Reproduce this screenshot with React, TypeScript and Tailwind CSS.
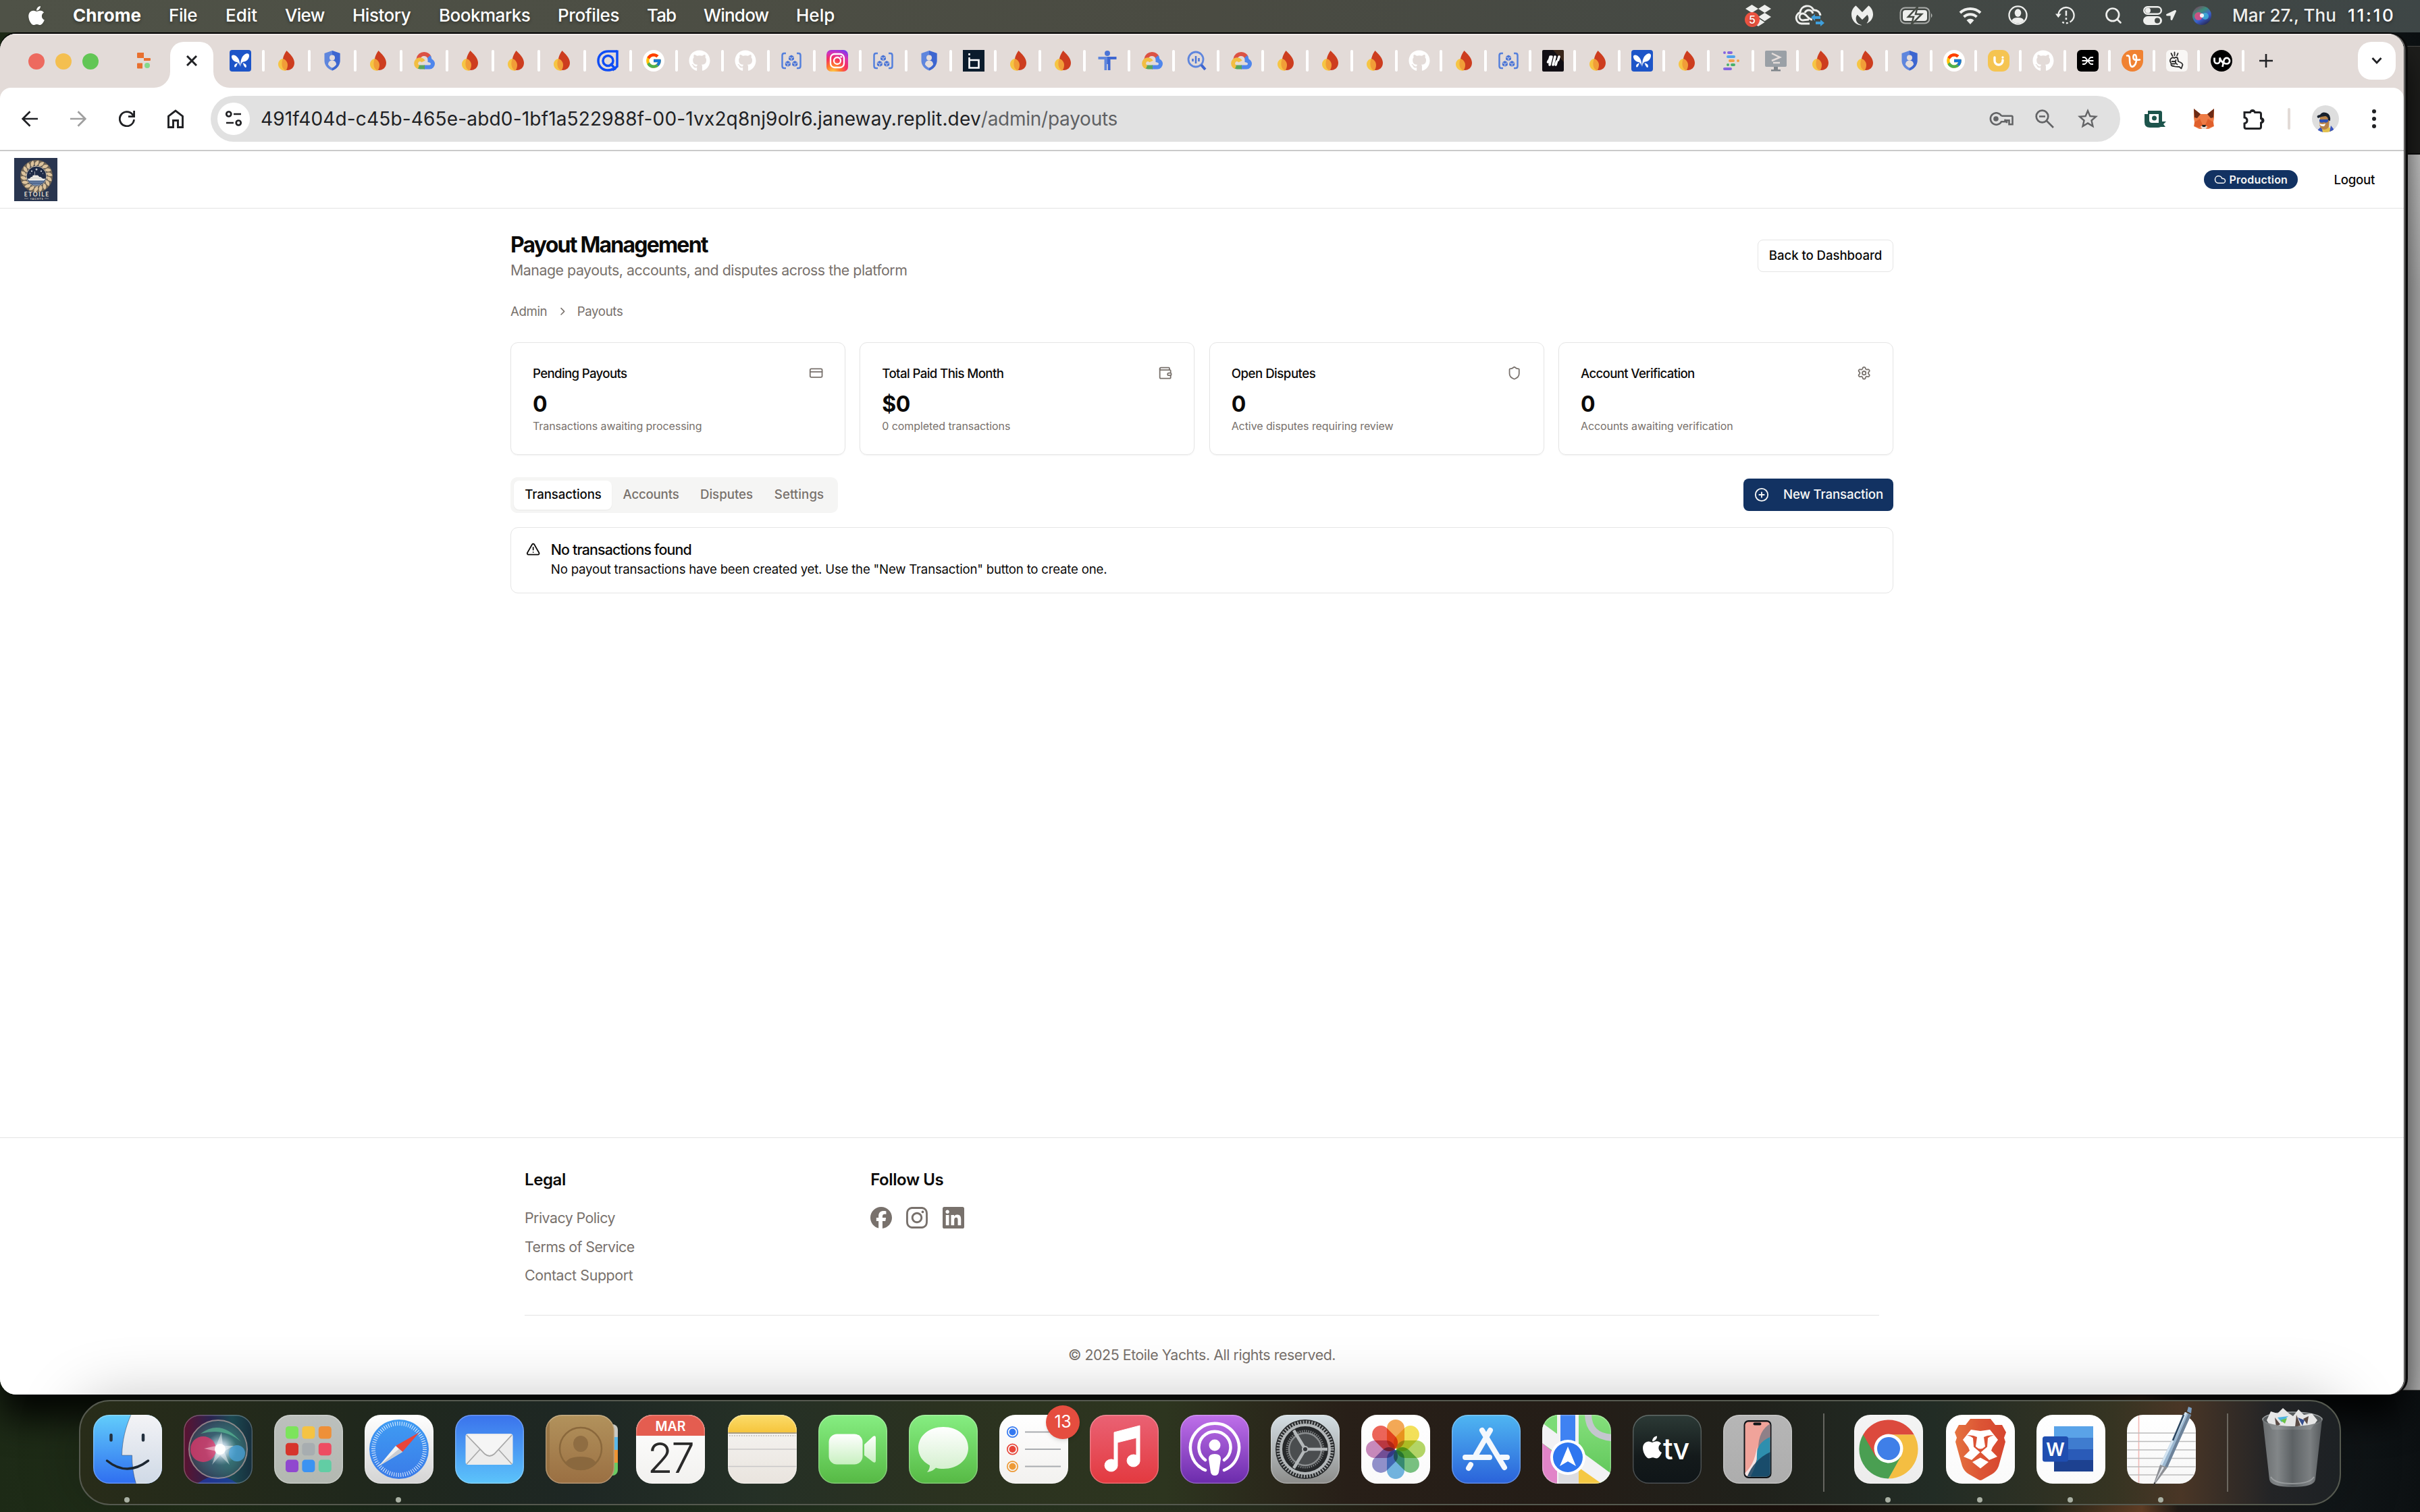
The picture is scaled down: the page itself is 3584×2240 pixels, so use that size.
import type { ReactNode } from 'react';
import { ChevronRight, CirclePlus, Cloud, CreditCard, Search, Settings, Shield, TriangleAlert, Wallet } from 'lucide-react';
import { FaApple, FaDropbox, FaGithub, FaLocationArrow } from 'react-icons/fa';
import { FcGoogle } from 'react-icons/fc';
import { MdStarBorder } from 'react-icons/md';
import { SiFacebook, SiInstagram, SiMalwarebytes } from 'react-icons/si';

/* ---------- shared svg helpers ---------- */

type Stop = [number, string];

function Lin({ id, stops, x2 = 0, y2 = 1 }: { id: string; stops: Stop[]; x2?: number; y2?: number }) {
  return (
    <linearGradient id={id} x1="0" y1="0" x2={x2} y2={y2}>
      {stops.map(([o, c]) => (
        <stop key={o} offset={o} stopColor={c} />
      ))}
    </linearGradient>
  );
}

function Fav({ children }: { children: ReactNode }) {
  return (
    <svg viewBox="0 0 32 32" className="size-8 shrink-0">
      {children}
    </svg>
  );
}

/* ---------- favicons ---------- */

const Flame = () => (
  <Fav>
    <path d="M16.5 1C11.500 8 10.500 13 10.500 19.500c0 7 3 10.500 7 10.500 5.500 0 10.500-4 10.500-11C28 12 21.500 6 16.500 1Z" fill="#cd3d1f" />
    <path d="M11 13C6.500 13.500 4 17.500 4 21c0 6 5 10 12 10-4-2-6-6-6-11z" fill="#f6c544" />
    <path d="M11 13c4 1 7 5 7 9.500 0 3.500-1.500 6.500-2.500 8C9 29 8 19 11 13Z" fill="#f19d38" />
  </Fav>
);

const Butterfly = () => (
  <Fav>
    <rect width="32" height="32" rx="4" fill="#1d55c8" />
    <path d="M15.500 25C15.500 17 14 12 9 8.500 5.500 6.500 2.500 7.500 3 10.500c.5 4 4 7 8 7.500 2 .5 3.500 3 4.500 7Z" fill="#fff" />
    <path d="M16 25c0-9 1.500-15 6.500-18.500 4-2.500 7-1 6.500 2.500-.5 5-4 8-8.500 8.500-2.500.5-4 3.500-4.500 7.500Z" fill="#fff" />
    <path d="M12 19c-1 3-2 6-3.500 6.500S6.500 23 8 21.500 11 20 12 19ZM19.500 19c1 3 2.500 6.500 4 7s2-2.500.5-4.500-3.500-1.500-4.500-2.500Z" fill="#fff" />
  </Fav>
);

const ShieldFav = () => (
  <Fav>
    <path d="M16 1 4.500 5v11c0 7 5 12 11.500 14.500C22.500 28 27.500 23 27.500 16V5Z" fill="#5f86dd" />
    <path d="M16 1v29.500C22.500 28 27.500 23 27.500 16V5Z" fill="#3d66d0" />
    <circle cx="16" cy="11.500" r="4" fill="#e4dcda" />
    <path d="M10 21.500c0-4 3-6 6-6s6 2 6 6c-1.500 2.500-3.500 4-6 5-2.500-1-4.500-2.500-6-5Z" fill="#e4dcda" />
  </Fav>
);

const CloudFav = () => (
  <Fav>
    <g fill="none" strokeWidth="6">
      <path d="M7.500 13.500C8.500 8.500 12 6 16 6c3.500 0 6.500 2 8 5" stroke="#dc5244" />
      <path d="M23 10c1.500 1.500 1.500 4 1.500 5.500 2.500.5 4.500 2.500 4.500 5s-2 5-5 5h-8" stroke="#4f86ec" />
      <path d="M17 25.500h-7c-1.500 0-2.500-.5-3.500-1.500" stroke="#58a55c" />
      <path d="M8 25.500C4.500 24 3.500 21 4.500 18c1-3 4.500-4.500 7.500-3.500 1.500.5 2.500 1.500 3 2.500" stroke="#f2be42" />
    </g>
  </Fav>
);

const QFav = () => (
  <Fav>
    <path d="M30 2H17C8 2 2 8 2 16s6 14 14 14c3 0 6-.5 8-2" fill="none" stroke="#0f4df5" strokeWidth="3.500" />
    <path d="M30 .5v24L23 30" fill="none" stroke="#0f4df5" strokeWidth="3.500" />
    <circle cx="16.500" cy="16" r="7.500" fill="none" stroke="#0f4df5" strokeWidth="3.500" />
    <path d="m20 20 8 9" stroke="#0f4df5" strokeWidth="3.500" />
  </Fav>
);

const GoogleFav = () => (
  <span className="flex size-8 shrink-0 items-center justify-center rounded-full bg-white">
    <FcGoogle className="size-[26px]" />
  </span>
);

const GithubFav = () => <FaGithub className="size-8 shrink-0 text-white" />;

const Brackets = () => (
  <Fav>
    <path d="M8 5H5.500Q2.500 5 2.500 8v16q0 3 3 3H8M24 5h2.500q3 0 3 3v16q0 3-3 3H24" fill="none" stroke="#5580dc" strokeWidth="2.500" />
    <g fill="#4a74d6">
      <path d="m16 7.500 4 2.300v4.400l-4 2.300-4-2.300V9.800ZM10.800 16l4 2.300v4.400l-4 2.300-4-2.300v-4.400ZM21.200 16l4 2.300v4.400l-4 2.300-4-2.300v-4.400Z" />
    </g>
    <path d="M12 10l4 2.300 4-2.300M16 12.300v4M6.800 18.500l4 2.300 4-2.300m-4 2.300V25m6.400-6.500 4 2.300 4-2.300m-4 2.300V25" stroke="#e4dcda" strokeWidth=".9" fill="none" />
  </Fav>
);

const Insta = () => (
  <Fav>
    <defs>
      <radialGradient id="ig" cx=".3" cy="1.050" r="1.150">
        <stop offset="0" stopColor="#ffd54a" />
        <stop offset=".3" stopColor="#ff7a2e" />
        <stop offset=".58" stopColor="#f5305f" />
        <stop offset=".8" stopColor="#d432b8" />
        <stop offset="1" stopColor="#7a38f0" />
      </radialGradient>
    </defs>
    <rect width="32" height="32" rx="7" fill="url(#ig)" />
    <rect x="6" y="6" width="20" height="20" rx="6" fill="none" stroke="#fff" strokeWidth="2.300" />
    <circle cx="16" cy="16" r="5" fill="none" stroke="#fff" strokeWidth="2.300" />
    <circle cx="21.700" cy="10.300" r="1.400" fill="#fff" />
  </Fav>
);

const DarkB = () => (
  <Fav>
    <rect width="32" height="32" fill="#0b1c2c" />
    <path d="M9.500 5v3M9.500 11v15.500h14V15h-14" fill="none" stroke="#fff" strokeWidth="2.600" />
  </Fav>
);

const PersonFav = () => (
  <Fav>
    <circle cx="16" cy="5" r="4" fill="#4a74d6" />
    <path d="M2.500 10H16v20h-4.500V14h-9Z" fill="#5f86dd" />
    <path d="M29.500 10H16v20h4.500V14h9Z" fill="#3d66d0" />
    <path d="M16 21v9" stroke="#e4dcda" strokeWidth="1.500" />
  </Fav>
);

const Analytics = () => (
  <Fav>
    <circle cx="15" cy="14" r="11" fill="none" stroke="#5f86dd" strokeWidth="2.800" />
    <path d="m23 22 6 7" stroke="#3d66d0" strokeWidth="4" />
    <path d="M10.500 13v4M15 9v11M19.500 12v5" stroke="#4a74d6" strokeWidth="2.500" />
  </Fav>
);

const Hashes = () => (
  <Fav>
    <rect width="32" height="32" rx="2" fill="#110e14" />
    <path d="M16 0h14q2 0 2 2v16Z" fill="#4a301c" opacity=".7" />
    <path d="M10.500 15 12 10M19 10l-3 12M25 10l-1.500 5M14 10l-3 12M8.500 18l1-2M20 22l1.500-5" stroke="#fff" strokeWidth="3.600" strokeLinecap="round" />
  </Fav>
);

const Ide = () => (
  <Fav>
    <g strokeWidth="4" strokeLinecap="round">
      <path d="M6 4h.01M12 4h4" stroke="#8565e0" />
      <path d="M11 10h9" stroke="#4fa3ea" />
      <path d="M14 16h5M26 16h.01" stroke="#f3a04c" />
      <path d="M11 22h.01M17 22h3" stroke="#47b06b" />
      <path d="M6 28h9" stroke="#8565e0" />
    </g>
  </Fav>
);

const Shell = () => (
  <Fav>
    <rect y="1" width="32" height="24" rx="2" fill="#9aa0a6" />
    <path d="M13 25h6v4h4v2.500H9V29h4Z" fill="#80868b" />
    <path d="m10 5 12 6-12 5M12 19h10" stroke="#e4dcda" strokeWidth="2.500" fill="none" />
  </Fav>
);

const YellowU = () => (
  <Fav>
    <rect width="32" height="32" rx="11" fill="#f5c451" />
    <path d="M10 11v5a6 6 0 0 0 12 0v-1" fill="none" stroke="#fff" strokeWidth="3.400" strokeLinecap="round" />
    <circle cx="22" cy="11" r="1.700" fill="#fff" />
  </Fav>
);

const BlackX = () => (
  <Fav>
    <rect width="32" height="32" rx="6" fill="#000" />
    <path d="M8 11h3q2 0 4.500 5Q13 21 10.500 21H8M24 11h-3q-2 0-4.500 5 2.500 5 5 5H24M7.500 16h17" fill="none" stroke="#fff" strokeWidth="1.800" />
  </Fav>
);

const OrangeV = () => (
  <Fav>
    <path d="M16 0h13q3 0 3 3v13A16 16 0 1 1 16 0Z" fill="#f08232" />
    <path d="M8 8.500q4-1 4 4.500 0 12 4 12 6-2 6-12 0-6-2.500-6t-2 5q.5 4 9.500 2.500" fill="none" stroke="#fff" strokeWidth="2.600" strokeLinecap="round" />
  </Fav>
);

const Snap = () => (
  <Fav>
    <rect width="32" height="32" rx="6" fill="#f9f7f5" />
    <g fill="none" stroke="#2b2b2b" strokeWidth="1.800" strokeLinecap="round" strokeLinejoin="round">
      <path d="m7.500 5 2 4M12.500 3.500v4.500M17.500 5l-1.500 3.500" />
      <path d="M7 13q3-3 5-1 3-2 5 0l1 5q6 2 6.500 5l-2 5.500-3-2.500q-6 0-8-1-5 0-4-4-3-4-.5-7Z" />
      <path d="M8.500 17h5M9 20.500h4M14.500 15q-2 4 2 6.500" />
    </g>
  </Fav>
);

const Up = () => (
  <Fav>
    <circle cx="16" cy="16" r="16" fill="#000" />
    <path d="M5.500 11.500v4.500a4 4 0 0 0 8 0v-4.500q2 6 5.500 8M17.500 25l2-9a4.300 4.300 0 1 1 4 4.500q-4 0-6-4.500" fill="none" stroke="#fff" strokeWidth="2.700" />
  </Fav>
);

const FAVICONS = [
  Butterfly, Flame, ShieldFav, Flame, CloudFav, Flame, Flame, Flame, QFav, GoogleFav, GithubFav, GithubFav, Brackets,
  Insta, Brackets, ShieldFav, DarkB, Flame, Flame, PersonFav, CloudFav, Analytics, CloudFav, Flame, Flame, Flame,
  GithubFav, Flame, Brackets, Hashes, Flame, Butterfly, Flame, Ide, Shell, Flame, Flame, ShieldFav, GoogleFav, YellowU,
  GithubFav, BlackX, OrangeV, Snap, Up,
];

/* ---------- menu bar ---------- */

const MENUS: [string, string][] = [
  ['File', 'w-[84px] tracking-[-0.4px]'],
  ['Edit', 'w-[88px] tracking-[0px]'],
  ['View', 'w-[100px] tracking-[-0.7px]'],
  ['History', 'w-[128px] tracking-[-0.5px]'],
  ['Bookmarks', 'w-[176px] tracking-[-0.5px]'],
  ['Profiles', 'w-[132px] tracking-[-0.4px]'],
  ['Tab', 'w-[84px] tracking-[-0.9px]'],
  ['Window', 'w-[137px] tracking-[-0.8px]'],
  ['Help', 'w-[60px] tracking-[0px]'],
];

function MenuBar() {
  return (
    <header className="relative z-20 flex h-12 shrink-0 items-center bg-linear-to-r from-[#4f5247] via-[#4a4b42] to-[#3e4646] pb-[3px] font-[Inter,sans-serif] text-[26px] font-medium text-white [text-shadow:0_2px_4px_rgba(0,0,0,0.35)]">
      <FaApple className="ml-[38px] h-8 w-8 drop-shadow" />
      <span className="ml-[38px] w-[142px] font-bold tracking-[0.1px]">Chrome</span>
      {MENUS.map(([label, cls]) => (
        <span key={label} className={`shrink-0 ${cls}`}>
          {label}
        </span>
      ))}
      <div className="ml-auto flex items-center text-[#eeefed]">
        <div className="relative mr-[35px] flex w-[38px]">
          <FaDropbox className="size-[38px]" />
          <span className="absolute -left-px top-[14px] flex h-[22px] w-[22px] items-center justify-center rounded-full bg-[#ec5340] text-[16px] text-white">5</span>
        </div>
        <svg viewBox="0 0 44 32" className="mr-[40px] h-8 w-11">
          <path d="M22 28H10A8.500 8.500 0 0 1 8 11.500 10.500 10.500 0 0 1 28 8a9 9 0 0 1 10 8" fill="none" stroke="currentColor" strokeWidth="3" />
          <path d="M21 22c-4 0-6 1-9 1a5 5 0 0 1 0-10c5 0 8 9 14 9M15 12c2-5 10-6 12 1" fill="none" stroke="currentColor" strokeWidth="3" />
          <path d="M24 18.500 30 14v3h8v4h-8v3ZM44 27l-6-5v3h-7v4h7v3Z" fill="#3f9fdc" />
        </svg>
        <SiMalwarebytes className="mr-[39px] size-[32px]" />
        <svg viewBox="0 0 50 26" className="mr-[38px] h-[26px] w-[50px]">
          <rect x="1.500" y="1.500" width="43" height="23" rx="7" fill="none" stroke="currentColor" strokeWidth="2" opacity=".6" />
          <rect x="5" y="5" width="36" height="16" rx="4" fill="currentColor" />
          <path d="M47 9.500q3 3.500 0 7Z" fill="currentColor" opacity=".7" />
          <path d="M27 0 13 15h8l-3 11 15-15h-9Z" fill="currentColor" stroke="#454a43" strokeWidth="2.500" />
        </svg>
        <svg viewBox="0 0 34 26" className="mr-[39px] h-[26px] w-[34px]">
          <path d="M2 9a22 22 0 0 1 30 0M7.500 15a14 14 0 0 1 19 0" fill="none" stroke="currentColor" strokeWidth="4" />
          <path d="M11.500 20a8 8 0 0 1 11 0L17 26Z" fill="currentColor" />
        </svg>
        <svg viewBox="0 0 30 30" className="mr-[41px] size-[29px]">
          <circle cx="15" cy="15" r="13.500" fill="none" stroke="currentColor" strokeWidth="2.400" />
          <ellipse cx="15" cy="11.500" rx="5" ry="6" fill="currentColor" />
          <path d="M5.500 23q2-4.500 9.500-4.500t9.500 4.500q-4 4.500-9.500 4.500T5.500 23Z" fill="currentColor" />
        </svg>
        <svg viewBox="0 0 30 30" className="mr-[43px] size-[29px]">
          <path d="M4.500 15A12 12 0 1 1 9 24.500" fill="none" stroke="currentColor" strokeWidth="2.400" strokeDasharray="50 3 3 3 3 3" />
          <path d="M0 13h9l-4.500 6Z" fill="currentColor" />
          <path d="M16.500 8v8M16.500 19v3" stroke="currentColor" strokeWidth="2.600" />
        </svg>
        <Search className="mr-[30px] size-[28px]" strokeWidth={2.3} />
        <svg viewBox="0 0 28 28" className="mr-[6px] size-[28px]">
          <rect x="1.200" y="1.200" width="25.600" height="10.600" rx="5.300" fill="none" stroke="currentColor" strokeWidth="2.400" />
          <circle cx="7" cy="6.500" r="4" fill="currentColor" />
          <rect y="15" width="28" height="13" rx="6.500" fill="currentColor" />
          <circle cx="21" cy="21.500" r="4" fill="#454a47" />
        </svg>
        <FaLocationArrow className="mr-[24px] size-[15px]" />
        <svg viewBox="0 0 28 28" className="mr-[31px] size-[28px]">
          <defs>
            <Lin id="siriS" x2={0.6} stops={[[0, '#8a2b55'], [0.4, '#3d8f7c'], [0.7, '#3b60d0'], [1, '#2a2f63']]} />
          </defs>
          <circle cx="14" cy="14" r="14" fill="url(#siriS)" />
          <circle cx="9" cy="15" r="6" fill="#e04c82" opacity=".85" />
          <circle cx="19" cy="15" r="5" fill="#3fb4d8" opacity=".8" />
          <circle cx="14" cy="14" r="3" fill="#fff" opacity=".9" />
        </svg>
        <span className="w-[171px] tracking-[0px]">Mar 27., Thu</span>
        <span className="w-[107px] tracking-[2.7px] text-white">11:10</span>
      </div>
    </header>
  );
}

/* ---------- browser chrome ---------- */

function TabStrip() {
  return (
    <div className="flex h-20 shrink-0 items-center border-t-2 border-[#f0eae8] bg-[#e3dbd8]">
      <div className="ml-[42px] flex gap-4">
        <span className="size-6 rounded-full bg-[#ed6a5f]" />
        <span className="size-6 rounded-full bg-[#f4bf50]" />
        <span className="size-6 rounded-full bg-[#62c655]" />
      </div>
      <svg viewBox="0 0 20 24" className="mb-[2px] ml-[57px] h-6 w-5">
        <path d="M1 0h9v8H1a1 1 0 0 1-1-1V1a1 1 0 0 1 1-1ZM10 8h9q1 0 1 1v2q0 1-1 1h-9ZM1 15.500h7v8H1a1 1 0 0 1-1-1v-6a1 1 0 0 1 1-1Z" fill="#e8702f" />
        <circle cx="15" cy="19" r="4" fill="#84d98a" />
      </svg>
      <div className="relative ml-[29px] mt-[10px] flex h-[68px] w-16 items-center justify-center rounded-t-[20px] bg-white pb-[13px]">
        <svg viewBox="0 0 24 24" className="absolute -left-6 bottom-0 size-6">
          <path d="M24 0v24H0A24 24 0 0 0 24 0Z" fill="#fff" />
        </svg>
        <svg viewBox="0 0 24 24" className="absolute -right-6 bottom-0 size-6">
          <path d="M0 0v24h24A24 24 0 0 1 0 0Z" fill="#fff" />
        </svg>
        <svg viewBox="0 0 16 16" className="size-4">
          <path d="m1 1 14 14M15 1 1 15" stroke="#202124" strokeWidth="3" />
        </svg>
      </div>
      <div className="mb-[2px] ml-6 flex items-center">
        {FAVICONS.map((Icon, i) => (
          <div key={i} className={`flex items-center ${i < 15 ? 'w-[68px] gap-4' : 'w-[66px] gap-[14px]'}`}>
            <Icon />
            <span className="h-8 w-1 rounded-full bg-white" />
          </div>
        ))}
      </div>
      <svg viewBox="0 0 20 20" className="mb-[2px] ml-[6px] size-5">
        <path d="M10 0v20M0 10h20" stroke="#202124" strokeWidth="2.600" />
      </svg>
      <div className="mb-[2px] ml-auto mr-3 flex size-14 items-center justify-center rounded-[20px] bg-white">
        <svg viewBox="0 0 16 12" className="h-3 w-4">
          <path d="m1.500 2 6.500 7 6.500-7" fill="none" stroke="#202124" strokeWidth="2.800" />
        </svg>
      </div>
    </div>
  );
}

function Toolbar() {
  return (
    <div className="shrink-0 bg-[#e3dbd8]">
      <div className="flex h-[94px] items-center rounded-t-[16px] border-b-2 border-[#cacaca] bg-white text-[#202124]">
        <svg viewBox="0 0 24 24" className="ml-8 size-6">
          <path d="M24 12H2M12.500 1.200 1.700 12l10.800 10.800" fill="none" stroke="currentColor" strokeWidth="2.700" />
        </svg>
        <svg viewBox="0 0 24 24" className="ml-12 size-6 text-[#9f9f9f]">
          <path d="M0 12h22M11.500 1.200 22.300 12 11.500 22.800" fill="none" stroke="currentColor" strokeWidth="2.700" />
        </svg>
        <svg viewBox="0 0 24 24" className="ml-12 size-6">
          <path d="M22.500 13a10.600 10.600 0 1 1-2.500-7.700L22 7.500M22.600 0v8.700H14" fill="none" stroke="currentColor" strokeWidth="2.800" />
        </svg>
        <svg viewBox="0 0 24 28" className="ml-12 h-7 w-6">
          <path d="M1.500 26.500V10.200L12 2l10.500 8.200v16.300h-7v-10h-7v10Z" fill="none" stroke="currentColor" strokeWidth="2.900" />
        </svg>
        <div className="ml-10 flex h-[68px] w-[2828px] items-center rounded-full bg-[#e1e1e1] text-[28px] text-[#202124]">
          <span className="ml-[10px] flex size-12 items-center justify-center rounded-full bg-white">
            <svg viewBox="0 0 24 24" className="size-6" fill="none" stroke="currentColor" strokeWidth="2.700">
              <circle cx="4.800" cy="5" r="3.500" />
              <path d="M12 5h11M1 18h11" />
              <circle cx="19.200" cy="18" r="3.500" />
            </svg>
          </span>
          <span className="ml-4 font-[Inter,sans-serif] tracking-[0.17px]">
            491f404d-c45b-465e-abd0-1bf1a522988f-00-1vx2q8nj9olr6.janeway.replit.dev
            <span className="tracking-[-0.25px] text-[#5f6164]">/admin/payouts</span>
          </span>
          <div className="ml-auto flex items-center text-[#636466]">
            <svg viewBox="0 0 36 20" className="mr-8 h-5 w-9" fill="none" stroke="currentColor" strokeWidth="2.600">
              <path d="M18.200 5.800A8.700 8.700 0 1 0 18.200 14.200h5.300v-3.400M18.200 5.800H33q1.500 0 1.500 1.500v11h-5v-6h-3.500v4" />
              <circle cx="10" cy="10" r="3.800" fill="currentColor" stroke="none" />
            </svg>
            <svg viewBox="0 0 28 28" className="mr-[32px] size-7" fill="none" stroke="currentColor" strokeWidth="2.700">
              <circle cx="10.500" cy="10.500" r="8.800" />
              <path d="m17 17 10 10M6 10.500h9" />
            </svg>
            <MdStarBorder className="mr-[30px] size-9" />
          </div>
        </div>
        <svg viewBox="0 0 32 26" className="ml-9 h-[26px] w-8">
          <path d="M5 1h18q3 0 3 3v13h6l-4 4 3 4h-7q-2 1-4 1H8q-8 0-8-8V6h5Z" fill="#1d544c" />
          <path d="M7 6h14v13H11q-4 0-4-4Z" fill="#fff" />
          <circle cx="14.500" cy="12" r="3.500" fill="#1d544c" />
        </svg>
        <svg viewBox="0 0 30 30" className="ml-[41px] size-[30px]">
          <path d="M0 0 10 8h10L30 0v14l-1 6 1 6-8 4H8l-8-4 1-6-1-6Z" fill="#ee7b45" />
          <path d="m0 0 10 8-5 6-4-1ZM30 0 20 8l5 6 4-1Z" fill="#6b2b16" />
          <path d="m1 20 8-5 4 9-5 4-7-2ZM29 20l-8-5-4 9 5 4 7-2Z" fill="#e0602c" />
          <path d="M10 26h10l-2 4h-6Z" fill="#e8dcd4" />
          <path d="M12 24h6l-1 3h-4Z" fill="#232323" />
        </svg>
        <svg viewBox="0 0 32 32" className="ml-[43px] size-8">
          <path d="M2 6.500h8.500a3.800 3.800 0 0 1 7 0H24q2.500 0 2.500 2.500v6.500a3.500 3.500 0 0 1 0 6.500v6q0 2.500-2.500 2.500H4.500Q2 30.500 2 28v-5q4-1 4-4.500T2 14Z" fill="none" stroke="currentColor" strokeWidth="3" />
          <path d="M10 6a4 4 0 0 1 8 0ZM27 14a4.500 4.500 0 0 1 0 9Z" fill="currentColor" />
        </svg>
        <span className="ml-[34px] h-8 w-1 rounded-full bg-[#e2dbd7]" />
        <svg viewBox="0 0 40 40" className="ml-8 size-10">
          <defs>
            <clipPath id="av">
              <circle cx="20" cy="20" r="20" />
            </clipPath>
          </defs>
          <g clipPath="url(#av)">
            <rect width="40" height="40" fill="#dedede" />
            <path d="M9 44q1-10 12-12 10 0 12 12Z" fill="#e2c04e" />
            <path d="M9 36l5-5 2 9H9ZM32 35l-4-5-2 10h6Z" fill="#3a56c0" />
            <path d="M12 18q0-5 6-6 8-1 8 7l-1 13q-3 4-7 4-6-1-7-8Z" fill="#b98449" />
            <path d="M9 19q-4-4 3-5 3-5 9-3 7 2 6 12l-3-1q0-5-4-6l-6 1Z" fill="#17202c" />
            <path d="M11 21h13v3q-3 3-6 1-5 2-7-1Z" fill="#2c51b8" />
            <path d="M11 27q5 2 9 0-1 5-4 4-4 0-5-4Z" fill="#fff" />
          </g>
        </svg>
        <svg viewBox="0 0 6 28" className="ml-[49px] h-7 w-1.5" fill="currentColor">
          <circle cx="3" cy="3" r="3" />
          <circle cx="3" cy="14" r="3" />
          <circle cx="3" cy="25" r="3" />
        </svg>
      </div>
    </div>
  );
}

/* ---------- page ---------- */

function Logo() {
  const leaves = Array.from({ length: 18 }, (_, i) => i * 20);
  return (
    <svg viewBox="0 0 64 64" className="size-16">
      <rect width="64" height="64" fill="#29354f" />
      <circle cx="33" cy="27" r="20" fill="none" stroke="#6f6454" strokeWidth="8" />
      {leaves.map((a) => (
        <g key={a} transform={`rotate(${a} 33 27)`}>
          <path d="M33 2.500q5 4 1 10-6-4-1-10Z" fill="#dcc39c" transform="rotate(35 33 8)" />
        </g>
      ))}
      <circle cx="33" cy="27" r="15" fill="#1f2c48" stroke="#e4d3b4" strokeWidth="1" />
      <path d="M20 32h26a14 14 0 0 1-26 0Z" fill="#6b86ab" />
      <path d="M20 31h26l-2 2H22ZM25 28.500h14l3 2H23ZM28 26h7l2 2H27ZM30.500 20v6" fill="#f2efe8" stroke="#f2efe8" strokeWidth=".6" />
      <path d="M33 15.500v3M31.500 17h3M26 18.500v2M25 19.500h2M40 18.500v2M39 19.500h2M23 23h1M42 23h1" stroke="#fff" strokeWidth=".9" />
      <path d="M21 35h24M23 37.500h20" stroke="#33486e" strokeWidth=".8" />
      <text x="33.800" y="56.500" textAnchor="middle" fontFamily="Lato, sans-serif" fontWeight="700" fontSize="8.500" letterSpacing="1.600" fill="#e8e0d2">ETOILE</text>
      <text x="33.500" y="61.500" textAnchor="middle" fontFamily="Lato, sans-serif" fontWeight="700" fontSize="4" letterSpacing=".8" fill="#cfc8bc">YACHTS</text>
      <path d="M15 60h6M45 60h6" stroke="#cfc8bc" strokeWidth=".6" />
    </svg>
  );
}

const STATS: { title: string; cls: string; value: string; note: string; icon: ReactNode }[] = [
  { title: 'Pending Payouts', cls: 'tracking-[-0.66px]', value: '0', note: 'Transactions awaiting processing', icon: <CreditCard className="size-[21.33px]" strokeWidth={2} /> },
  { title: 'Total Paid This Month', cls: 'tracking-[-0.6px]', value: '$0', note: '0 completed transactions', icon: <Wallet className="size-[21.33px]" strokeWidth={2} /> },
  { title: 'Open Disputes', cls: 'tracking-[-0.5px]', value: '0', note: 'Active disputes requiring review', icon: <Shield className="size-[21.33px]" strokeWidth={2} /> },
  { title: 'Account Verification', cls: 'tracking-[-0.66px]', value: '0', note: 'Accounts awaiting verification', icon: <Settings className="size-[21.33px]" strokeWidth={2} /> },
];

function Page() {
  return (
    <div className="flex grow flex-col bg-white font-[Inter,sans-serif] text-[#0b0a09]">
      <div className="flex h-[85px] shrink-0 items-center border-b border-[#e3e3e3] pl-[21px] pr-[43px]">
        <Logo />
        <span className="ml-auto mr-[54px] flex h-7 w-[139px] items-center rounded-full bg-[#123262] pl-[15px] text-[16px] font-semibold tracking-[0.2px] text-[#f5f5f4]">
          <Cloud className="mr-[5px] size-[18px]" strokeWidth={2} />
          Production
        </span>
        <span className="mt-[2px] text-[18.67px] font-medium tracking-[-0.3px]">Logout</span>
      </div>

      <main className="mx-auto w-[2048px] pt-8">
        <div className="flex h-[75px] items-center justify-between">
          <div>
            <h1 className="text-[32px] leading-[43px] font-bold tracking-[-1.78px]">Payout Management</h1>
            <p className="text-[21.33px] leading-8 tracking-[-0.46px] text-[#78716c]">Manage payouts, accounts, and disputes across the platform</p>
          </div>
          <button className="flex h-12 w-[201px] items-center justify-center rounded-lg border border-[#e5e5e5] text-[18.67px] font-medium tracking-[-0.08px]">Back to Dashboard</button>
        </div>

        <nav className="mt-8 flex h-[27px] items-center text-[18.67px] text-[#78716c]">
          <span className="w-[54px] tracking-[-0.4px]">Admin</span>
          <ChevronRight className="ml-[14px] mr-[12px] size-[18.67px]" strokeWidth={2} />
          <span className="tracking-[-0.35px]">Payouts</span>
        </nav>

        <section className="mt-8 grid grid-cols-4 gap-[21.33px]">
          {STATS.map((s) => (
            <div key={s.title} className="h-[167px] rounded-[11px] border border-[#e5e5e5] px-8 pt-8 shadow-xs">
              <div className="flex h-[27px] items-center justify-between">
                <h3 className={`text-[18.67px] font-medium ${s.cls}`}>{s.title}</h3>
                <span className="-mt-[2px] text-[#78716c]">{s.icon}</span>
              </div>
              <p className="mt-[10px] text-[32px] leading-[44px] font-bold tracking-[-0.6px]">{s.value}</p>
              <p className="text-[16px] leading-[21px] tracking-[-0.08px] text-[#78716c]">{s.note}</p>
            </div>
          ))}
        </section>

        <div className="mt-[33px] flex h-[52px] items-center justify-between">
          <div className="flex h-[53px] w-[485px] items-center rounded-[10px] bg-[#f5f5f4] px-[5px] text-[18.67px] font-medium text-[#78716c]">
            <span className="flex h-[43px] w-[145px] items-center justify-center rounded-lg bg-white pl-[1px] tracking-[-0.15px] text-[#0b0a09] shadow-xs">Transactions</span>
            <span className="flex w-[115px] justify-center pl-[1px] tracking-[-0.2px]">Accounts</span>
            <span className="flex w-[110px] justify-center">Disputes</span>
            <span className="flex w-[105px] justify-center tracking-[0.1px]">Settings</span>
          </div>
          <button className="flex h-12 w-[222px] items-center rounded-lg bg-[#123262] pl-4 text-[18.67px] font-medium tracking-[-0.15px] text-[#f8f8f7]">
            <CirclePlus className="mr-[21px] size-[22px]" strokeWidth={2} />
            New Transaction
          </button>
        </div>

        <div className="mt-[22px] flex h-[98px] rounded-[11px] border border-[#e5e5e5] pl-[21.5px] pt-[21px]">
          <TriangleAlert className="mr-[16px] size-[21.33px]" strokeWidth={2} />
          <div>
            <h5 className="text-[21.33px] leading-[22px] font-medium tracking-[-0.84px]">No transactions found</h5>
            <p className="mt-[3px] text-[18.67px] leading-[31px] tracking-[-0.22px]">No payout transactions have been created yet. Use the "New Transaction" button to create one.</p>
          </div>
        </div>
      </main>

      <footer className="mt-auto h-[381px] shrink-0 border-t border-[#e3e3e3] pt-[43px]">
        <div className="mx-auto w-[2006px]">
          <div className="grid h-[219px] grid-cols-4 gap-[42.67px]">
            <div>
              <h4 className="text-[24px] leading-[37px] font-semibold tracking-[-0.4px]">Legal</h4>
              <ul className="mt-[22px] flex flex-col gap-[10.5px] text-[21.33px] leading-8 text-[#78716c]">
                <li className="tracking-[-0.52px]">Privacy Policy</li>
                <li className="tracking-[-0.58px]">Terms of Service</li>
                <li className="tracking-[-0.36px]">Contact Support</li>
              </ul>
            </div>
            <div>
              <h4 className="text-[24px] leading-[37px] font-semibold tracking-[-0.4px]">Follow Us</h4>
              <div className="mt-[22px] flex gap-[21.33px] text-[#78716c]">
                <SiFacebook className="size-8" />
                <SiInstagram className="size-8" />
                <svg viewBox="0 0 24 24" className="size-8" fill="currentColor">
                  <path d="M20.447 20.452h-3.554v-5.569c0-1.328-.027-3.037-1.852-3.037-1.853 0-2.136 1.445-2.136 2.939v5.667H9.351V9h3.414v1.561h.046c.477-.9 1.637-1.850 3.370-1.850 3.601 0 4.267 2.370 4.267 5.455v6.286zM5.337 7.433c-1.144 0-2.063-.926-2.063-2.065 0-1.138.920-2.063 2.063-2.063 1.140 0 2.064.925 2.064 2.063 0 1.139-.925 2.065-2.064 2.065zm1.782 13.019H3.555V9h3.564v11.452zM22.225 0H1.771C.792 0 0 .774 0 1.729v20.542C0 23.227.792 24 1.771 24h20.451C23.200 24 24 23.227 24 22.271V1.729C24 .774 23.200 0 22.222 0h.003z" />
                </svg>
              </div>
            </div>
          </div>
          <div className="border-t border-[#e3e3e3] pt-[42px] text-center text-[21.33px] leading-8 tracking-[-0.44px] text-[#78716c]">© 2025 Etoile Yachts. All rights reserved.</div>
        </div>
      </footer>
    </div>
  );
}

/* ---------- dock ---------- */

function Tile({ id, stops, children, x2, y2 }: { id: string; stops: Stop[]; children?: ReactNode; x2?: number; y2?: number }) {
  return (
    <svg viewBox="0 0 102 102" className="size-[102px] shrink-0 overflow-visible">
      <defs>
        <Lin id={id} stops={stops} x2={x2} y2={y2} />
        <clipPath id={`${id}c`}>
          <rect width="102" height="102" rx="24" />
        </clipPath>
      </defs>
      <g clipPath={`url(#${id}c)`}>
        <rect width="102" height="102" fill={`url(#${id})`} />
        {children}
      </g>
      <rect x=".7" y=".7" width="100.600" height="100.600" rx="23.500" fill="none" stroke="#fff" strokeOpacity=".25" strokeWidth="1.400" />
    </svg>
  );
}

const Finder = () => (
  <Tile id="fi" stops={[[0, '#62cdfb'], [1, '#2f6ef0']]}>
    <defs>
      <Lin id="fi2" stops={[[0, '#f3f3f6'], [1, '#cfd9e6']]} />
    </defs>
    <path d="M56 0C48 18 43 38 42.500 60H57.500c0 15 2 29 6 42H102V0Z" fill="url(#fi2)" />
    <path d="M56 0C48 18 43 38 42.500 60H57.500c0 15 2 29 6 42" fill="none" stroke="#33445c" strokeWidth="1" opacity=".5" />
    <path d="M26.500 30v7.500M74 30v7.500" stroke="#23303e" strokeWidth="4.500" strokeLinecap="round" />
    <path d="M20.500 68Q50 92 81.500 68" fill="none" stroke="#1c2630" strokeWidth="3.500" strokeLinecap="round" />
  </Tile>
);

const Siri = () => (
  <Tile id="si" x2={1} y2={0} stops={[[0, '#5c1330'], [0.4, '#2a2450'], [0.7, '#1c4a52'], [1, '#172e3c']]}>
    <defs>
      <radialGradient id="si2" cx=".55" cy=".5" r=".55">
        <stop offset="0" stopColor="#fff" />
        <stop offset=".2" stopColor="#cfe6f2" stopOpacity=".85" />
        <stop offset=".5" stopColor="#4b8f8e" stopOpacity=".55" />
        <stop offset="1" stopColor="#2f4a58" stopOpacity=".7" />
      </radialGradient>
    </defs>
    <path d="M20 102q30-22 60 0Z" fill="#1d3fae" opacity=".7" />
    <circle cx="51" cy="51" r="43" fill="url(#si2)" stroke="#b7a3a0" strokeOpacity=".7" strokeWidth="2" />
    <circle cx="29" cy="51" r="19" fill="#e5386c" opacity=".75" />
    <circle cx="79" cy="57" r="12" fill="#4da8e4" opacity=".7" />
    <path d="M25 28Q55 5 85 40 60 18 25 28Z" fill="#5fc79a" opacity=".6" />
    <path d="M56 26 58 46 74 46 60 54 68 74 54 60 42 74 49 54 30 50 48 46Z" fill="#fff" opacity=".45" />
    <circle cx="54" cy="51" r="8" fill="#fff" opacity=".95" />
  </Tile>
);

const PADS = [
  ['#7ce45c', '#f5c342', '#ee9038'],
  ['#d6352b', '#a7adb0', '#ee4c62'],
  ['#9048cf', '#3b93f2', '#62cda4'],
];

const Launchpad = () => (
  <Tile id="lp" stops={[[0, '#bcc0bd'], [1, '#b3b8b1']]}>
    {PADS.map((row, r) => row.map((c, k) => <rect key={c} x={17 + k * 24.4} y={17 + r * 24.8} width="19" height="18.500" rx="4.500" fill={c} />))}
  </Tile>
);

const Safari = () => (
  <Tile id="sa" stops={[[0, '#ffffff'], [1, '#d4d4d4']]}>
    <defs>
      <Lin id="sa2" stops={[[0, '#3f9cf3'], [1, '#3a7be8']]} />
    </defs>
    <circle cx="51" cy="51" r="44" fill="url(#sa2)" />
    <circle cx="51" cy="51" r="38" fill="none" stroke="#fff" strokeOpacity=".85" strokeWidth="6" strokeDasharray="1 2.320" />
    <path d="M81 26 46 46l10 9Z" fill="#e8453a" />
    <path d="M21 76 46 46l10 9Z" fill="#f2f2f2" />
    <path d="M21 76 56 55l-5-4.500Z" fill="#c9ccd1" />
  </Tile>
);

const Mail = () => (
  <Tile id="ma" stops={[[0, '#3a72ec'], [1, '#5cc4fb']]}>
    <rect x="15.500" y="28" width="70" height="46" rx="4" fill="#ececec" />
    <path d="M17 73 38 50M84 73 63 50" stroke="#a8a8a8" strokeWidth="1.600" />
    <path d="M17 30 44 58q7 6 14 0L84 30" fill="#f5f5f5" stroke="#a8a8a8" strokeWidth="1.800" />
  </Tile>
);

const Contacts = () => (
  <Tile id="co" stops={[[0, '#b2925c'], [1, '#9a6f42']]}>
    <path d="M0 0h6v102H0Z" fill="#8f6a3c" opacity=".6" />
    <circle cx="52" cy="50" r="31" fill="none" stroke="#8a683c" strokeWidth="2.500" />
    <ellipse cx="52" cy="43" rx="11" ry="12" fill="#8f6d42" />
    <path d="M29 72q4-10 23-10t23 10q-9 10-23 10T29 72Z" fill="#8a683e" />
  </Tile>
);

const Calendar = () => (
  <Tile id="ca" stops={[[0, '#ffffff'], [1, '#f2f1ef']]}>
    <rect width="102" height="31" fill="#e45d50" />
    <text x="51" y="24" textAnchor="middle" fontFamily="Inter" fontWeight="600" fontSize="19.500" fill="#fff">MAR</text>
    <text x="50.500" y="86" textAnchor="middle" fontFamily="Inter" fontWeight="300" fontSize="62" letterSpacing="-2.500" fill="#2a2a2a">27</text>
  </Tile>
);

const Notes = () => (
  <Tile id="no" stops={[[0, '#f7f6f4'], [1, '#e9e4de']]}>
    <defs>
      <Lin id="no2" stops={[[0, '#fbdc6c'], [1, '#f6c53c']]} />
    </defs>
    <rect width="102" height="26" fill="url(#no2)" />
    <path d="M0 27h102" stroke="#a89c80" strokeWidth="2" />
    <path d="M2 31h98" stroke="#b5b1ab" strokeWidth="1.600" strokeDasharray="1.600 2" />
    <path d="M0 51h102M0 76.500h102" stroke="#c9c8c8" strokeWidth="1.600" />
  </Tile>
);

const FaceTime = () => (
  <Tile id="ft" stops={[[0, '#86ee82'], [1, '#56b944']]}>
    <defs>
      <Lin id="ft2" stops={[[0, '#ffffff'], [1, '#c8f0c0']]} />
    </defs>
    <rect x="15.500" y="28.500" width="50" height="45" rx="12" fill="url(#ft2)" />
    <path d="M68 44 81 32q4-2 4 2v34q0 4-4 2L68 60Z" fill="url(#ft2)" />
  </Tile>
);

const Messages = () => (
  <Tile id="me" stops={[[0, '#86ee82'], [1, '#56b944']]}>
    <defs>
      <Lin id="me2" stops={[[0, '#ffffff'], [1, '#d2efcc']]} />
    </defs>
    <path d="M51 18c21 0 37 13 37 31S72 80 51 80c-4 0-8-.5-11-1.500C37 82 33 84 27 85c3-3 4-7 4-10C20 69 14 60 14 49c0-18 16-31 37-31Z" fill="url(#me2)" />
  </Tile>
);

const Reminders = () => (
  <span className="relative">
    <Tile id="re" stops={[[0, '#ffffff'], [1, '#f2f1ef']]}>
      {['#3478f0', '#e8463a', '#ed9a36'].map((c, i) => (
        <g key={c}>
          <circle cx="19.500" cy={25.5 + i * 25.5} r="7.700" fill="none" stroke={c} strokeWidth="1.700" />
          <circle cx="19.500" cy={25.5 + i * 25.5} r="5" fill={c} />
          <path d={`M38 ${25.5 + i * 25.5}h53`} stroke="#a9acb0" strokeWidth="2" />
        </g>
      ))}
    </Tile>
    <span className="absolute -right-[17px] -top-[14px] flex size-[50px] items-center justify-center rounded-full bg-[#e54d3f] font-[Inter,sans-serif] text-[25px] tracking-[-0.4px] text-white shadow-md">13</span>
  </span>
);

const Music = () => (
  <Tile id="mu" stops={[[0, '#ea6274'], [1, '#e3393f']]}>
    <path d="M36 26 74 16v53a9.500 9 0 1 1-5-9V34L41 41v35a9.500 9 0 1 1-5-9Z" fill="#fff" stroke="#fff" strokeWidth="1" strokeLinejoin="round" />
  </Tile>
);

const Podcasts = () => (
  <Tile id="po" stops={[[0, '#bf70ea'], [1, '#6b2bab']]}>
    <g fill="none" stroke="#fff" strokeWidth="4.500" strokeLinecap="round">
      <path d="M37 82A36 36 0 1 1 65 82" />
      <path d="M37 67A23.500 23.500 0 1 1 65 67" />
    </g>
    <circle cx="51" cy="45" r="8.500" fill="#fff" />
    <path d="M42 65q0-7 9-7t9 7l-3 20q-1 5-6 5t-6-5Z" fill="#fff" />
  </Tile>
);

const SystemSettings = () => (
  <Tile id="sy" stops={[[0, '#d5dfe5'], [1, '#8c8c8a']]}>
    <circle cx="51" cy="51" r="44" fill="#26282a" />
    <circle cx="51" cy="51" r="40" fill="none" stroke="#a4a7a9" strokeWidth="5" strokeDasharray="1.900 2.300" />
    <circle cx="51" cy="51" r="36" fill="none" stroke="#b4b8ba" strokeWidth="4" />
    <circle cx="51" cy="51" r="27" fill="none" stroke="#7a7d7f" strokeWidth="3" strokeDasharray="1.600 1.600" />
    <circle cx="51" cy="51" r="24" fill="#4a4d4f" stroke="#8a8d8f" strokeWidth="2.500" />
    <path d="M51 51h33M51 51 34 23M51 51 34 79" stroke="#b4b8ba" strokeWidth="4.500" />
    <circle cx="51" cy="51" r="4" fill="#35373a" stroke="#b4b8ba" strokeWidth="2" />
  </Tile>
);

const PETALS = ['#f29a38', '#f3dc3c', '#a8d04c', '#62b96c', '#5aa9dd', '#7f7fc4', '#c075b0', '#ea4a3c'];

const Photos = () => (
  <Tile id="ph" stops={[[0, '#ffffff'], [1, '#fafafa']]}>
    {PETALS.map((c, i) => (
      <rect key={c} x="38" y="7" width="26" height="43" rx="13" fill={c} opacity=".85" transform={`rotate(${i * 45} 51 51)`} className="mix-blend-multiply" />
    ))}
  </Tile>
);

const AppStore = () => (
  <Tile id="as" stops={[[0, '#4fb6f2'], [1, '#2a62da']]}>
    <g stroke="#f4f8fd" strokeWidth="8" strokeLinecap="round">
      <path d="M57 23 36 59M45 23l33 55M20 63h36M73 63h9M28 74l-3 5" />
    </g>
  </Tile>
);

const Maps = () => (
  <Tile id="mp" stops={[[0, '#85e07c'], [1, '#5dc457']]}>
    <path d="M0 0h24v22L0 10Z" fill="#7cdc76" />
    <path d="M0 12l106 78v16H90L0 42Z" fill="#f2f2f4" />
    <path d="M0 42 30 66v38H0Z" fill="#e184c8" />
    <path d="M54 78 88 102H54Z" fill="#f5c842" />
    <path d="M22 0h32v102H22Z" fill="#f2f2f4" />
    <path d="M54 78v24H24V78Z" fill="#dcdce0" />
    <path d="M27 0h22v60H27Z" fill="#3f82f2" />
    <path d="M68 -2q0 34 36 36" fill="none" stroke="#c4c6ce" strokeWidth="10" />
    <circle cx="38" cy="63" r="26" fill="#fff" />
    <circle cx="38" cy="63" r="22" fill="#2f76f0" />
    <path d="M38 47 50 76 38 69 26 76Z" fill="#fff" />
  </Tile>
);

const AppleTv = () => (
  <Tile id="tv" stops={[[0, '#2c3a36'], [0.6, '#141a1b'], [1, '#0f1518']]}>
    <g transform="translate(10 29)">
      <FaApple size={38} color="#fff" />
    </g>
    <text x="45" y="66" fontFamily="Inter" fontWeight="500" fontSize="43" letterSpacing="-1" fill="#fff">tv</text>
  </Tile>
);

const Phone = () => (
  <Tile id="ip" stops={[[0, '#b6b6b6'], [1, '#adadad']]}>
    <defs>
      <clipPath id="ips">
        <rect x="32.500" y="10.500" width="37" height="81" rx="5" />
      </clipPath>
    </defs>
    <rect x="30.500" y="8" width="41" height="86" rx="7" fill="#101418" />
    <g clipPath="url(#ips)">
      <path d="M30 8h42v88H30Z" fill="#f0a39a" />
      <path d="M72 12Q52 22 52 50l20-14Z" fill="#8f8088" />
      <path d="M72 32Q46 42 50 66 44 80 38 96h34Z" fill="#2e8fae" />
      <path d="M30 88q16-12 20-40 2 26-12 48h-8Z" fill="#f3e3e3" />
      <path d="M34 96Q44 66 72 54v42Z" fill="#15415f" opacity=".85" />
    </g>
    <rect x="44.500" y="11.500" width="12" height="4" rx="2" fill="#101418" />
  </Tile>
);

const Chrome = () => (
  <Tile id="cr" stops={[[0, '#f4f4f4'], [1, '#ececec']]}>
    <path d="M13.300 29.200A43.500 43.500 0 0 0 51 94.500L70 62 51 51Z" fill="#4a9f52" />
    <path d="M88.700 29.200A43.500 43.500 0 0 1 51 94.500L70 60 51 29.200Z" fill="#f4be42" />
    <path d="M51 29.200h37.700a43.500 43.500 0 0 0-75.400 0L32 62Z" fill="#dc4a3d" />
    <circle cx="51" cy="50" r="21.500" fill="#fff" />
    <circle cx="51" cy="50" r="17" fill="#3f7fe8" />
  </Tile>
);

const Brave = () => (
  <Tile id="br" stops={[[0, '#ffffff'], [1, '#fafafa']]}>
    <defs>
      <Lin id="br2" x2={1} y2={0} stops={[[0, '#e5733f'], [0.5, '#dc5535'], [1, '#d6452f']]} />
    </defs>
    <path d="M36 6h30l7 9h10l6 11-3 8 2 6-10 36q-3 8-10 12l-14 8q-3 2-6 0l-14-8q-7-4-10-12L14 40l2-6-3-8 6-11h10Z" fill="url(#br2)" />
    <path d="M37 22l14 2 14-2 12 15-8 11-2 5 9 9-12 5-13-12-13 12-12-5 9-9-2-5-8-11Z" fill="#fff" />
    <path d="M31 30.500q9-1 15 2.500l-2 14q7 7 14 0l-2-14q6-3.500 15-2.500-6 1-9 4l-1 13-10 8.500-10-8.500-1-13q-3-3-9-4Z" fill="#db5234" />
    <path d="M51 63.500 63 70 51 79.500 39 70Z" fill="#fff" />
  </Tile>
);

const Word = () => (
  <Tile id="wo" stops={[[0, '#ffffff'], [1, '#fbfbfb']]}>
    <rect x="26" y="17" width="58" height="17" fill="#5aa3e8" />
    <rect x="26" y="34" width="58" height="17" fill="#3f7ccf" />
    <rect x="26" y="51" width="58" height="16.500" fill="#2a5bb8" />
    <rect x="26" y="67" width="58" height="17" fill="#1d4190" />
    <rect x="9" y="32" width="38" height="37.500" rx="3.500" fill="#1f4eb0" />
    <text x="28" y="60.500" textAnchor="middle" fontFamily="Inter" fontWeight="600" fontSize="27" fill="#fff">W</text>
  </Tile>
);

const TextEdit = () => (
  <span className="relative">
    <Tile id="te" stops={[[0, '#ffffff'], [1, '#f7f7f7']]}>
      <path d="M17.500 0v102" stroke="#f2b8b5" strokeWidth="1.600" />
      <path d="M0 27h102M0 39.500h102M0 52h102M0 64.500h102M0 77h102M0 89h102" stroke="#bcbcbc" strokeWidth="1.600" />
    </Tile>
    <svg viewBox="0 0 102 124" className="absolute -top-[14px] left-0 h-[124px] w-[102px]">
      <path d="m86 10 9 4L60 92 49 88Z" fill="#9db9d2" />
      <path d="m91 12 4 2-35 78-4-1Z" fill="#6d8299" />
      <path d="m86 10 3 1-37 78-3-1Z" fill="#d5e5f2" />
      <path d="M89 9 91 2l5 2-1 8Z" fill="#7c9dbf" />
      <path d="m49 88 11 4-18 24-2-1Z" fill="#8d8f94" />
      <path d="m52 91 3 1-14 23Z" fill="#dfe3e8" />
      <path d="M84 14 68 52" stroke="#2c4660" strokeWidth="2.500" />
      <path d="m42 115-2-1-1 7Z" fill="#333" />
    </svg>
  </span>
);

const Trash = () => (
  <svg viewBox="0 0 92 118" className="h-[118px] w-[92px]">
    <defs>
      <Lin id="tr" x2={1} y2={0} stops={[[0, '#6f7375'], [0.25, '#8b8f91'], [0.5, '#62676a'], [0.8, '#84888a'], [1, '#595d60']]} />
    </defs>
    <ellipse cx="46" cy="17" rx="44" ry="11" fill="#55595b" stroke="#9ea2a4" strokeWidth="1.500" />
    <path d="M8 18 14 5l10 3L32 0l9 8 6 4 8-10 8 8 12-2 8 10-10 14H16Z" fill="#e6e6e6" />
    <path d="m20 14 8 10-6 4ZM52 10l6 16-8 2ZM62 16l8-4-2 12Z" fill="#5a4a44" />
    <path d="m24 14 16-2-10 9Z" fill="#4fb4e0" />
    <path d="m28 18 10-3-3 8Z" fill="#6cc24a" />
    <path d="m54 14 10 4-3 8Z" fill="#37508f" />
    <path d="M2 17q8 9 44 10 36-1 44-10L80 106q-2 11-34 11T12 106Z" fill="url(#tr)" opacity=".92" />
    <path d="M14 102q6 10 32 10t32-10" fill="none" stroke="#b0b4b5" strokeWidth="2" opacity=".6" />
  </svg>
);

function DockItem({ children, open, className = '' }: { children: ReactNode; open?: boolean; className?: string }) {
  return (
    <div className={`relative flex w-[102px] shrink-0 ${className}`}>
      {children}
      {open && <span className="absolute left-[46px] top-[122px] size-2 rounded-full bg-[#a9b0a3]" />}
    </div>
  );
}

function Dock() {
  return (
    <div className="relative z-10 ml-[117px] mt-2 flex h-[156px] w-[3350px] shrink-0 items-start rounded-[46px] border-2 border-[#55594f] bg-[linear-gradient(90deg,#282c19_0%,#20281c_12%,#1e2724_22%,#253026_30%,#2b3220_38%,#2d351f_48%,#281f18_56%,#241d17_66%,#20211b_74%,#222c25_82%,#363422_90%,#4a3626_93%,#232426_97%,#1d2124_100%)] pl-[19px] pt-5 shadow-[0_0_90px_rgba(0,0,0,0.25)]">
      <div className="flex gap-8">
        <DockItem open><Finder /></DockItem>
        <DockItem><Siri /></DockItem>
        <DockItem><Launchpad /></DockItem>
        <DockItem open><Safari /></DockItem>
        <DockItem><Mail /></DockItem>
        <DockItem>
          <span className="absolute -right-[5px] top-[14px] flex h-[76px] w-4 flex-col overflow-hidden rounded-r-lg">
            <i className="h-1/4 bg-[#c9c9c4]" />
            <i className="h-1/4 bg-[#5ab8ea]" />
            <i className="h-1/4 bg-[#ef9434]" />
            <i className="h-1/4 bg-[#6acb62]" />
          </span>
          <span className="relative"><Contacts /></span>
        </DockItem>
        <DockItem><Calendar /></DockItem>
        <DockItem className="ml-[2px]"><Notes /></DockItem>
        <DockItem><FaceTime /></DockItem>
        <DockItem><Messages /></DockItem>
        <DockItem><Reminders /></DockItem>
        <DockItem><Music /></DockItem>
        <DockItem><Podcasts /></DockItem>
        <DockItem><SystemSettings /></DockItem>
        <DockItem><Photos /></DockItem>
        <DockItem><AppStore /></DockItem>
        <DockItem><Maps /></DockItem>
        <DockItem><AppleTv /></DockItem>
        <DockItem><Phone /></DockItem>
      </div>
      <span className="-mt-0.5 ml-[46px] h-[116px] w-0.5 bg-[#65655f]" />
      <div className="ml-[44px] flex gap-8">
        <DockItem open><Chrome /></DockItem>
        <DockItem open className="ml-[2px]"><Brave /></DockItem>
        <DockItem open><Word /></DockItem>
        <DockItem open><TextEdit /></DockItem>
      </div>
      <span className="-mt-0.5 ml-[46px] h-[116px] w-0.5 bg-[#6b675f]" />
      <div className="-mt-[10px] ml-[49px]">
        <Trash />
      </div>
    </div>
  );
}

/* ---------- desktop ---------- */

export default function App() {
  return (
    <div className="relative flex h-[2240px] w-[3584px] flex-col overflow-hidden bg-[linear-gradient(90deg,#1d2a16_0%,#22301a_8%,#1a281c_20%,#2a3a22_40%,#2b3120_52%,#24170f_60%,#1c120d_75%,#1e2417_84%,#6a4429_88.5%,#231d18_90%,#121719_96%,#0c1012_100%)]">
      <div className="absolute -right-10 top-[68px] h-[1992px] w-24 overflow-hidden rounded-[22px] border border-[#4a4a48] bg-[#1e1e1c]">
        <div className="mt-[158px] h-full border-t-2 border-[#0c0c0c] bg-[linear-gradient(180deg,#c8c8c8,#b0b0b0_10%,#b0b0b0_90%,#c8c8c8)]" />
      </div>
      <MenuBar />
      <div className="relative mt-[2px] flex h-[2016px] w-[3560px] shrink-0 flex-col rounded-[24px] shadow-[1px_0_0_#333,2px_0_0_#8c8a88,3px_0_0_#222,6px_0_0_#0a0a0a,0_-2px_0_#000,0_36px_50px_0_rgba(0,0,0,0.85)]">
        <div className="flex grow flex-col overflow-hidden rounded-[24px] bg-white">
          <TabStrip />
          <Toolbar />
          <Page />
        </div>
      </div>
      <Dock />
    </div>
  );
}
